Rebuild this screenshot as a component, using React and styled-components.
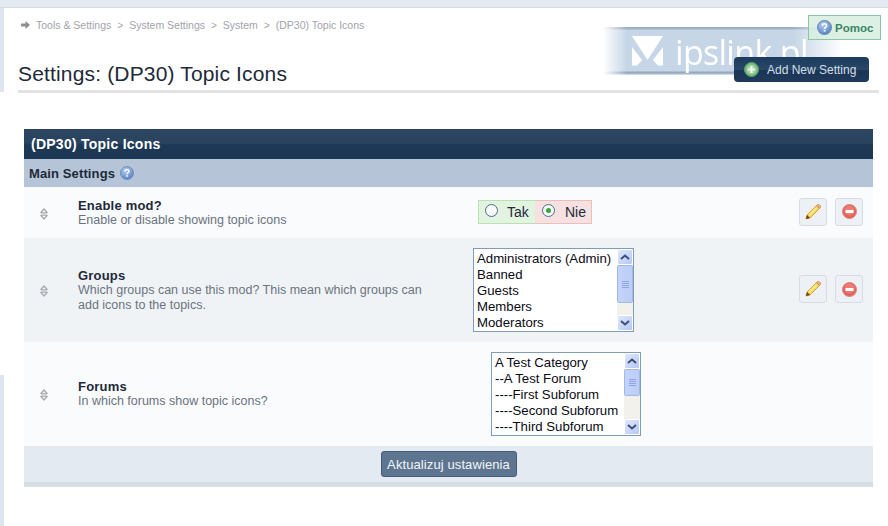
import React from "react";
import styled, { createGlobalStyle } from "styled-components";

const Global = createGlobalStyle`
  html, body { margin: 0; padding: 0; background: #fff; }
  body { font-family: "Liberation Sans", Arial, sans-serif; color: #1d2a3a; }
  #root { width: 888px; height: 526px; overflow: hidden; }
`;

const Page = styled.div`
  position: relative;
  display: flex;
  flex-direction: column;
  width: 888px;
  height: 526px;
  background: #fff;
`;
const TopStrip = styled.div`
  flex: none;
  height: 7px;
  background: #e3eaf2;
  border-bottom: 1px solid #d5dde5;
`;
const Body = styled.div`
  flex: 1;
  display: flex;
  min-height: 0;
`;
const Rail = styled.div`
  flex: none;
  width: 4px;
  display: flex;
  flex-direction: column;
`;
const RailPiece = styled.div`
  flex: ${(p) => (p.$grow ? 1 : "none")};
  height: ${(p) => (p.$h ? `${p.$h}px` : "auto")};
  background: ${(p) => (p.$blank ? "#fff" : "#dfe5ee")};
`;
const Main = styled.main`
  flex: 1;
  min-width: 0;
  display: flex;
  flex-direction: column;
  padding: 0 15px 0 14px;
`;
const Breadcrumb = styled.div`
  display: flex;
  align-items: center;
  height: 34px;
  padding-left: 3px;
  font-size: 10.5px;
  color: #a3a3ab;
`;
const Sep = styled.span`
  margin: 0 6px;
  font-size: 10px;
`;
const Header = styled.header`
  height: 51px;
  box-sizing: border-box;
  border-bottom: 3px solid #e2e2e2;
  display: flex;
  align-items: flex-end;
  margin-right: -6px;
`;
const Title = styled.h1`
  margin: 0 0 3px;
  font-size: 21px;
  line-height: 26px;
  letter-spacing: 0.16px;
  font-weight: 400;
  color: #1d2a3a;
`;
const Watermark = styled.div`
  position: absolute;
  left: 603px;
  top: 27px;
  width: 240px;
  height: 48px;
  box-sizing: border-box;
  display: flex;
  align-items: center;
  padding-left: 29px;
  gap: 12px;
  background: linear-gradient(#9db0c5, #9db0c5 2px, #c6d6e6 3px, #c6d6e6 44px, #94a9bf 45px, #94a9bf 46px, #dde6ee 48px);
  -webkit-mask-image: linear-gradient(90deg, transparent 0, #000 24px, #000 190px, transparent 100%);
  mask-image: linear-gradient(90deg, transparent 0, #000 24px, #000 190px, transparent 100%);
`;
const WatermarkText = styled.span`
  font-family: "Open Sans", sans-serif;
  font-weight: 400;
  font-size: 34px;
  letter-spacing: -0.7px;
  line-height: 1;
  padding-top: 2px;
  color: #fff;
  white-space: nowrap;
`;
const HelpButton = styled.a`
  position: absolute;
  left: 808px;
  top: 15px;
  width: 73px;
  height: 25px;
  box-sizing: border-box;
  display: flex;
  align-items: center;
  padding-left: 8px;
  gap: 3px;
  background: rgba(214, 238, 222, 0.85);
  border: 1px solid #8cc5a2;
  font-size: 11.5px;
  font-weight: 700;
  color: #3a8468;
`;
const AddButton = styled.a`
  position: absolute;
  left: 734px;
  top: 57px;
  width: 135px;
  height: 25px;
  box-sizing: border-box;
  display: flex;
  align-items: center;
  padding-left: 10px;
  gap: 8px;
  border-radius: 4px;
  background: linear-gradient(#1c3b5e 0, #284867 50%, #1b3554 51%, #1e3a5a 100%);
  font-size: 12px;
  color: #d3deea;
`;
const Panel = styled.section`
  margin: 36px 0 0 6px;
  border-bottom: 5px solid #d5dde5;
`;
const PanelTitle = styled.h2`
  margin: 0;
  height: 30px;
  padding-left: 7px;
  display: flex;
  align-items: center;
  background: linear-gradient(#2c4560 0, #2a435e 48%, #1d3956 52%, #1c3754 100%);
  color: #fff;
  font-size: 14px;
  letter-spacing: 0.25px;
  font-weight: 700;
`;
const SubTitle = styled.h3`
  margin: 0;
  height: 28px;
  padding-left: 5px;
  display: flex;
  align-items: center;
  gap: 5px;
  background: #b5c4d6;
  color: #1d2a3a;
  font-size: 13px;
  letter-spacing: 0.12px;
  font-weight: 700;
`;
const Row = styled.div`
  display: grid;
  grid-template-columns: 54px 395px 1fr 74px;
  align-items: center;
  height: ${(p) => p.$h}px;
  background: ${(p) => (p.$alt ? "#f0f3f6" : "#fafbfd")};
`;
const Grip = styled.div`
  display: flex;
  justify-content: center;
  margin: 2px 0 0 8px;
  width: 23px;
`;
const Label = styled.div`
  padding-right: 44px;
`;
const LabelTitle = styled.div`
  font-size: 13px;
  line-height: 15px;
  letter-spacing: 0.2px;
  font-weight: 700;
  color: #1d2a3a;
`;
const LabelDesc = styled.div`
  font-size: 12.5px;
  line-height: 15px;
  color: #6b7380;
`;
const Control = styled.div`
  padding-left: ${(p) => p.$indent || 0}px;
`;
const YesNo = styled.div`
  display: flex;
  width: max-content;
  height: 24px;
  margin-bottom: 2px;
  font-size: 14px;
  color: #1d2a3a;
`;
const Choice = styled.label`
  width: 57px;
  box-sizing: border-box;
  display: flex;
  align-items: center;
  gap: 9px;
  padding-left: 6px;
  background: ${(p) => (p.$on ? "#e2f4e0" : "#f6e1e1")};
  border: 1px solid ${(p) => (p.$on ? "#b9e2b4" : "#ebbdbd")};
  ${(p) => (p.$on ? "border-right: 0;" : "border-left: 0; padding-left: 7px; gap: 10px;")}
`;
const Radio = styled.span`
  width: 13px;
  height: 13px;
  box-sizing: border-box;
  border-radius: 50%;
  border: 1px solid #4b6a8b;
  background: #f7f9fa;
  display: flex;
  align-items: center;
  justify-content: center;
  margin-top: -2px;
  &::after {
    content: "";
    display: ${(p) => (p.$checked ? "block" : "none")};
    width: 5px;
    height: 5px;
    border-radius: 50%;
    background: #35a835;
  }
`;
const ListBox = styled.div`
  width: ${(p) => p.$w}px;
  height: 84px;
  box-sizing: border-box;
  border: 1px solid #7f9db9;
  background: #fff;
  display: flex;
`;
const Options = styled.div`
  flex: 1;
  min-width: 0;
  padding: 2px 0 0 3px;
  font-size: 13.2px;
  line-height: 16px;
  color: #0a0a14;
  white-space: nowrap;
  overflow: hidden;
`;
const Scrollbar = styled.div`
  flex: none;
  width: 16px;
  display: flex;
  flex-direction: column;
  background: #f3f1ec;
`;
const ScrollArrow = styled.div`
  flex: none;
  height: 16px;
  box-sizing: border-box;
  border: 1px solid #fff;
  border-radius: 2px;
  background: linear-gradient(135deg, #dfe8fb, #b5c7f5);
  display: flex;
  align-items: center;
  justify-content: center;
`;
const ScrollThumb = styled.div`
  flex: none;
  height: ${(p) => p.$h}px;
  box-sizing: border-box;
  border: 1px solid #a3b8e6;
  border-radius: 2px;
  background: linear-gradient(90deg, #c4d3fa, #bccdf7);
  display: flex;
  align-items: center;
  justify-content: center;
`;
const ScrollTrack = styled.div`
  flex: 1;
`;
const Actions = styled.div`
  display: flex;
  gap: 8px;
  margin-bottom: 2px;
`;
const IconButton = styled.a`
  width: 28px;
  height: 28px;
  box-sizing: border-box;
  border: 1px solid #d5dce4;
  border-radius: 3px;
  background: #edf1f5;
  display: flex;
  align-items: center;
  justify-content: center;
`;
const Footer = styled.div`
  height: 36px;
  background: #e4eaf2;
  display: flex;
  align-items: center;
  justify-content: center;
`;
const SaveButton = styled.button`
  height: 26px;
  width: 136px;
  padding: 0;
  box-sizing: border-box;
  font: 400 13px "Liberation Sans", Arial, sans-serif;
  letter-spacing: 0.1px;
  color: #f2f5f8;
  background: #5e7591;
  border: 1px solid #445b78;
  border-radius: 3px;
`;

const HelpIcon = ({ size = 14 }) => (
  <svg width={size} height={size} viewBox="0 0 14 14">
    <defs>
      <radialGradient id="hg" cx="0.4" cy="0.3" r="0.8">
        <stop offset="0" stopColor="#b7cff0" />
        <stop offset="1" stopColor="#4a78c0" />
      </radialGradient>
    </defs>
    <circle cx="7" cy="7" r="6.5" fill="url(#hg)" stroke="#6d8fbe" strokeWidth="1" />
    <path d="M5 5.4C5 4.2 6 3.6 7 3.6s2 .6 2 1.7c0 1.5-2 1.5-2 3" fill="none" stroke="#fff" strokeWidth="1.4" />
    <rect x="6.2" y="9.2" width="1.6" height="1.6" fill="#fff" />
  </svg>
);
const PlusIcon = () => (
  <svg width="15" height="15" viewBox="0 0 15 15">
    <circle cx="7.5" cy="7.5" r="7" fill="#76b87c" stroke="#5b9f66" />
    <circle cx="7.5" cy="7.5" r="5" fill="#9ed19f" />
    <path d="M7.5 4v7M4 7.5h7" stroke="#eef6ee" strokeWidth="2.2" />
  </svg>
);
const ForwardArrow = () => (
  <svg width="9" height="8" viewBox="0 0 9 8" style={{ marginRight: 6 }}>
    <path d="M0 2.5h4.5V0L9 4 4.5 8V5.5H0z" fill="#8f8f8f" />
  </svg>
);
const GripIcon = () => (
  <svg width="8" height="12" viewBox="0 0 8 12">
    <path d="M4 0L8 4.4 6.6 5.6H1.4L0 4.4z" fill="#a4a8ad" />
    <path d="M4 12L8 7.6 6.6 6.4H1.4L0 7.6z" fill="#a4a8ad" />
    <path d="M4 2L6 4.2H2zM4 10L6 7.8H2z" fill="#f4f5f6" />
  </svg>
);
const PencilIcon = () => (
  <svg width="16" height="16" viewBox="0 0 16 16">
    <path d="M1 15l1-4L11.5 1.5 14.5 4.5 5 14z" fill="#f5d54e" stroke="#c99a24" strokeWidth=".8" />
    <path d="M3.5 10.5l7-7 1.5 1.5-7 7z" fill="#fbe98e" />
    <path d="M11.5 1.5l3 3 1-1.2c.4-.6.2-1.2-.2-1.6l-1-1c-.5-.4-1.1-.4-1.6 0z" fill="#eeb38d" stroke="#bd7c52" strokeWidth=".7" />
    <path d="M1 15l1-4 3 3z" fill="#6b3d12" />
  </svg>
);
const RemoveIcon = () => (
  <svg width="15" height="15" viewBox="0 0 15 15">
    <circle cx="7.5" cy="7.5" r="7" fill="#e8605a" stroke="#d08a86" />
    <circle cx="7.5" cy="6.5" r="5" fill="#ee7c76" />
    <rect x="3.5" y="6" width="8" height="3" fill="#fff" />
  </svg>
);
const Chevron = ({ up }) => (
  <svg width="10" height="6" viewBox="0 0 10 6">
    <path d={up ? "M1 5l4-3.5L9 5" : "M1 1l4 3.5L9 1"} fill="none" stroke="#3c4f7c" strokeWidth="2" />
  </svg>
);
const ThumbGrip = () => (
  <svg width="7" height="7" viewBox="0 0 7 7">
    <path d="M0 .5h7M0 2.5h7M0 4.5h7M0 6.5h7" stroke="#8ea6e0" strokeWidth="1" />
  </svg>
);
const Logo = () => (
  <svg width="31" height="30" viewBox="0 0 31 30">
    <path d="M0 0H31L15.5 24z" fill="#fff" />
    <path d="M0 11L10 24 5 29.5H0zM31 11L21 24l5 5.5h5z" fill="#fff" />
  </svg>
);

const List = ({ width, items, thumb }) => (
  <ListBox $w={width}>
    <Options>
      {items.map((t) => (
        <div key={t}>{t}</div>
      ))}
    </Options>
    <Scrollbar>
      <ScrollArrow>
        <Chevron up />
      </ScrollArrow>
      <ScrollThumb $h={thumb}>
        <ThumbGrip />
      </ScrollThumb>
      <ScrollTrack />
      <ScrollArrow>
        <Chevron />
      </ScrollArrow>
    </Scrollbar>
  </ListBox>
);

const EditActions = () => (
  <Actions>
    <IconButton>
      <PencilIcon />
    </IconButton>
    <IconButton>
      <RemoveIcon />
    </IconButton>
  </Actions>
);

export default function App() {
  return (
    <Page>
      <Global />
      <TopStrip />
      <Body>
        <Rail>
          <RailPiece $h={84} />
          <RailPiece $h={283} $blank />
          <RailPiece $grow />
        </Rail>
        <Main>
          <Breadcrumb>
            <ForwardArrow />
            Tools &amp; Settings<Sep>&gt;</Sep>System Settings<Sep>&gt;</Sep>System<Sep>&gt;</Sep>(DP30) Topic Icons
          </Breadcrumb>
          <Header>
            <Title>Settings: (DP30) Topic Icons</Title>
          </Header>
          <Panel>
            <PanelTitle>(DP30) Topic Icons</PanelTitle>
            <SubTitle>
              Main Settings <HelpIcon />
            </SubTitle>
            <Row $h={51}>
              <Grip><GripIcon /></Grip>
              <Label>
                <LabelTitle>Enable mod?</LabelTitle>
                <LabelDesc>Enable or disable showing topic icons</LabelDesc>
              </Label>
              <Control $indent={5}>
                <YesNo>
                  <Choice $on><Radio />Tak</Choice>
                  <Choice><Radio $checked />Nie</Choice>
                </YesNo>
              </Control>
              <EditActions />
            </Row>
            <Row $h={104} $alt>
              <Grip><GripIcon /></Grip>
              <Label>
                <LabelTitle>Groups</LabelTitle>
                <LabelDesc>Which groups can use this mod? This mean which groups can add icons to the topics.</LabelDesc>
              </Label>
              <Control>
                <List width={161} thumb={38} items={["Administrators (Admin)", "Banned", "Guests", "Members", "Moderators"]} />
              </Control>
              <EditActions />
            </Row>
            <Row $h={104}>
              <Grip><GripIcon /></Grip>
              <Label>
                <LabelTitle>Forums</LabelTitle>
                <LabelDesc>In which forums show topic icons?</LabelDesc>
              </Label>
              <Control $indent={18}>
                <List width={150} thumb={27} items={["A Test Category", "--A Test Forum", "----First Subforum", "----Second Subforum", "----Third Subforum"]} />
              </Control>
              <div />
            </Row>
            <Footer>
              <SaveButton>Aktualizuj ustawienia</SaveButton>
            </Footer>
          </Panel>
        </Main>
      </Body>
      <Watermark>
        <Logo />
        <WatermarkText>ipslink.pl</WatermarkText>
      </Watermark>
      <AddButton>
        <PlusIcon />
        Add New Setting
      </AddButton>
      <HelpButton>
        <HelpIcon size={15} />
        Pomoc
      </HelpButton>
    </Page>
  );
}
